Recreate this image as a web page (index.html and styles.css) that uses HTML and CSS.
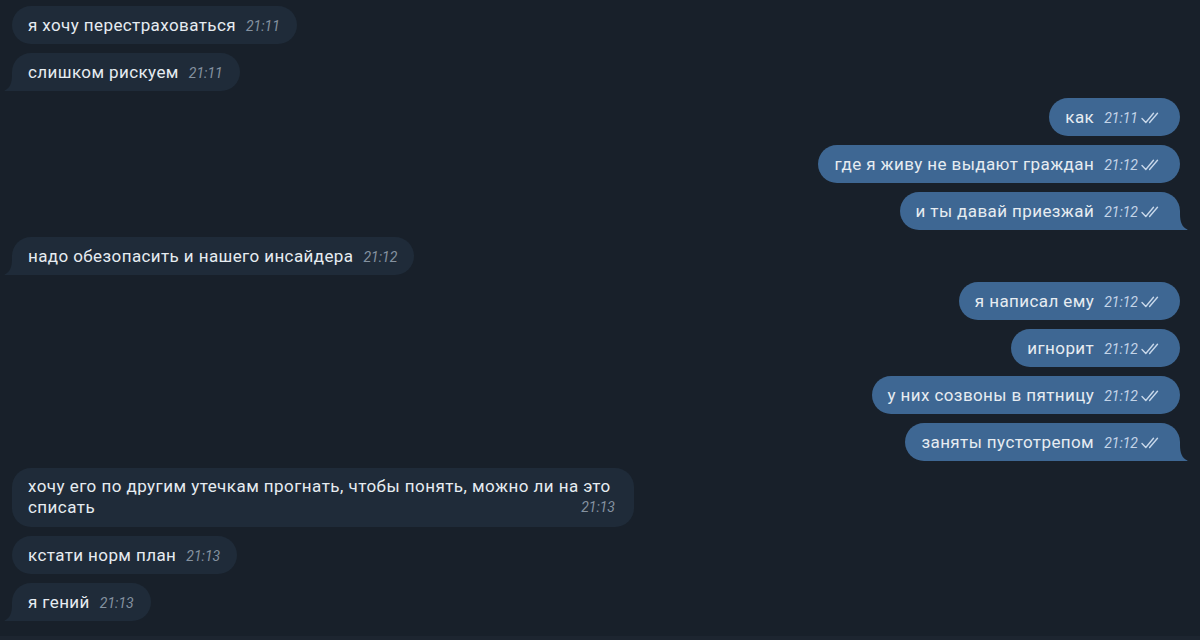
FILE: index.html
```html
<!DOCTYPE html>
<html lang="ru">
<head>
<meta charset="utf-8">
<title>Чат</title>
<link rel="stylesheet" href="styles.css">
</head>
<body>
<div class="chat">
  <div class="group in">
    <div class="bubble"><span class="text">я хочу перестраховаться</span><span class="time">21:11</span></div>
    <div class="bubble tail"><span class="text">слишком рискуем</span><span class="time">21:11</span><svg class="tail-svg" width="14" height="16" viewBox="0 0 14 16"><path d="M8 0 C8 8 6 13 0.5 15.6 C0 15.8 0.3 16 1 16 L14 16 L14 0 Z"/></svg></div>
  </div>
  <div class="group out">
    <div class="bubble"><span class="text">как</span><span class="time">21:11</span><svg class="ticks" width="19" height="12" viewBox="0 0 19 12"><path d="M1 6.5 L4.8 10.5 L12.5 1.3 M8.6 10.5 L16.5 1.3"/></svg></div>
    <div class="bubble"><span class="text">где я живу не выдают граждан</span><span class="time">21:12</span><svg class="ticks" width="19" height="12" viewBox="0 0 19 12"><path d="M1 6.5 L4.8 10.5 L12.5 1.3 M8.6 10.5 L16.5 1.3"/></svg></div>
    <div class="bubble tail"><span class="text">и ты давай приезжай</span><span class="time">21:12</span><svg class="ticks" width="19" height="12" viewBox="0 0 19 12"><path d="M1 6.5 L4.8 10.5 L12.5 1.3 M8.6 10.5 L16.5 1.3"/></svg><svg class="tail-svg" width="14" height="16" viewBox="0 0 14 16"><path d="M6 0 C6 8 8 13 13.5 15.6 C14 15.8 13.7 16 13 16 L0 16 L0 0 Z"/></svg></div>
  </div>
  <div class="group in">
    <div class="bubble tail"><span class="text">надо обезопасить и нашего инсайдера</span><span class="time">21:12</span><svg class="tail-svg" width="14" height="16" viewBox="0 0 14 16"><path d="M8 0 C8 8 6 13 0.5 15.6 C0 15.8 0.3 16 1 16 L14 16 L14 0 Z"/></svg></div>
  </div>
  <div class="group out">
    <div class="bubble"><span class="text">я написал ему</span><span class="time">21:12</span><svg class="ticks" width="19" height="12" viewBox="0 0 19 12"><path d="M1 6.5 L4.8 10.5 L12.5 1.3 M8.6 10.5 L16.5 1.3"/></svg></div>
    <div class="bubble"><span class="text">игнорит</span><span class="time">21:12</span><svg class="ticks" width="19" height="12" viewBox="0 0 19 12"><path d="M1 6.5 L4.8 10.5 L12.5 1.3 M8.6 10.5 L16.5 1.3"/></svg></div>
    <div class="bubble"><span class="text">у них созвоны в пятницу</span><span class="time">21:12</span><svg class="ticks" width="19" height="12" viewBox="0 0 19 12"><path d="M1 6.5 L4.8 10.5 L12.5 1.3 M8.6 10.5 L16.5 1.3"/></svg></div>
    <div class="bubble tail"><span class="text">заняты пустотрепом</span><span class="time">21:12</span><svg class="ticks" width="19" height="12" viewBox="0 0 19 12"><path d="M1 6.5 L4.8 10.5 L12.5 1.3 M8.6 10.5 L16.5 1.3"/></svg><svg class="tail-svg" width="14" height="16" viewBox="0 0 14 16"><path d="M6 0 C6 8 8 13 13.5 15.6 C14 15.8 13.7 16 13 16 L0 16 L0 0 Z"/></svg></div>
  </div>
  <div class="group in">
    <div class="bubble multi"><span class="text">хочу его по другим утечкам прогнать, чтобы понять, можно ли на это<br>списать</span><span class="time">21:13</span></div>
    <div class="bubble"><span class="text">кстати норм план</span><span class="time">21:13</span></div>
    <div class="bubble tail"><span class="text">я гений</span><span class="time">21:13</span><svg class="tail-svg" width="14" height="16" viewBox="0 0 14 16"><path d="M8 0 C8 8 6 13 0.5 15.6 C0 15.8 0.3 16 1 16 L14 16 L14 0 Z"/></svg></div>
  </div>
</div>
<div class="footer"></div>
</body>
</html>
```
FILE: styles.css
```css
* { box-sizing: border-box; }
html, body { margin: 0; padding: 0; }
body {
  width: 1200px;
  height: 640px;
  overflow: hidden;
  background: #18202a;
  font-family: Roboto, "Open Sans", "Liberation Sans", sans-serif;
  color: #e6ecf1;
  display: flex;
  flex-direction: column;
}
.chat {
  flex: 1;
  display: flex;
  flex-direction: column;
  gap: 7px;
  padding: 6px 20px 0 12px;
}
.group {
  display: flex;
  flex-direction: column;
  gap: 9px;
}
.group.in { align-items: flex-start; }
.group.out { align-items: flex-end; }
.bubble {
  position: relative;
  display: flex;
  align-items: baseline;
  height: 38px;
  padding: 0 17px 0 16px;
  border-radius: 19px;
  font-size: 17px;
  letter-spacing: 0.4px;
  line-height: 38px;
  white-space: nowrap;
}
.in .bubble { background: #1f2b39; }
.out .bubble { background: #3e6793; padding-right: 20px; }
.in .bubble.tail { border-bottom-left-radius: 0; }
.out .bubble.tail { border-bottom-right-radius: 0; }
.time {
  font-size: 14px;
  font-style: italic;
  letter-spacing: 0;
  margin-left: 10px;
}
.in .time { color: #8592a0; }
.out .time { color: #c3d4e8; }
.ticks {
  align-self: center;
  margin-left: 3px;
  margin-top: 2px;
  fill: none;
  stroke: #c8d8ea;
  stroke-width: 1.4;
  stroke-linecap: round;
  stroke-linejoin: round;
}
.tail-svg {
  position: absolute;
  bottom: 0;
}
.in .tail-svg { left: -8px; fill: #1f2b39; }
.out .tail-svg { right: -8px; fill: #3e6793; }
.bubble.multi {
  display: grid;
  height: auto;
  width: 622px;
  padding: 8px 19px 9px 16px;
  line-height: 21px;
  letter-spacing: 0.45px;
  white-space: nowrap;
}
.bubble.multi .text,
.bubble.multi .time { grid-area: 1 / 1; }
.bubble.multi .time {
  justify-self: end;
  align-self: end;
  line-height: 21px;
  letter-spacing: 0;
}
.footer {
  height: 4px;
  background: #1d2530;
}
```
